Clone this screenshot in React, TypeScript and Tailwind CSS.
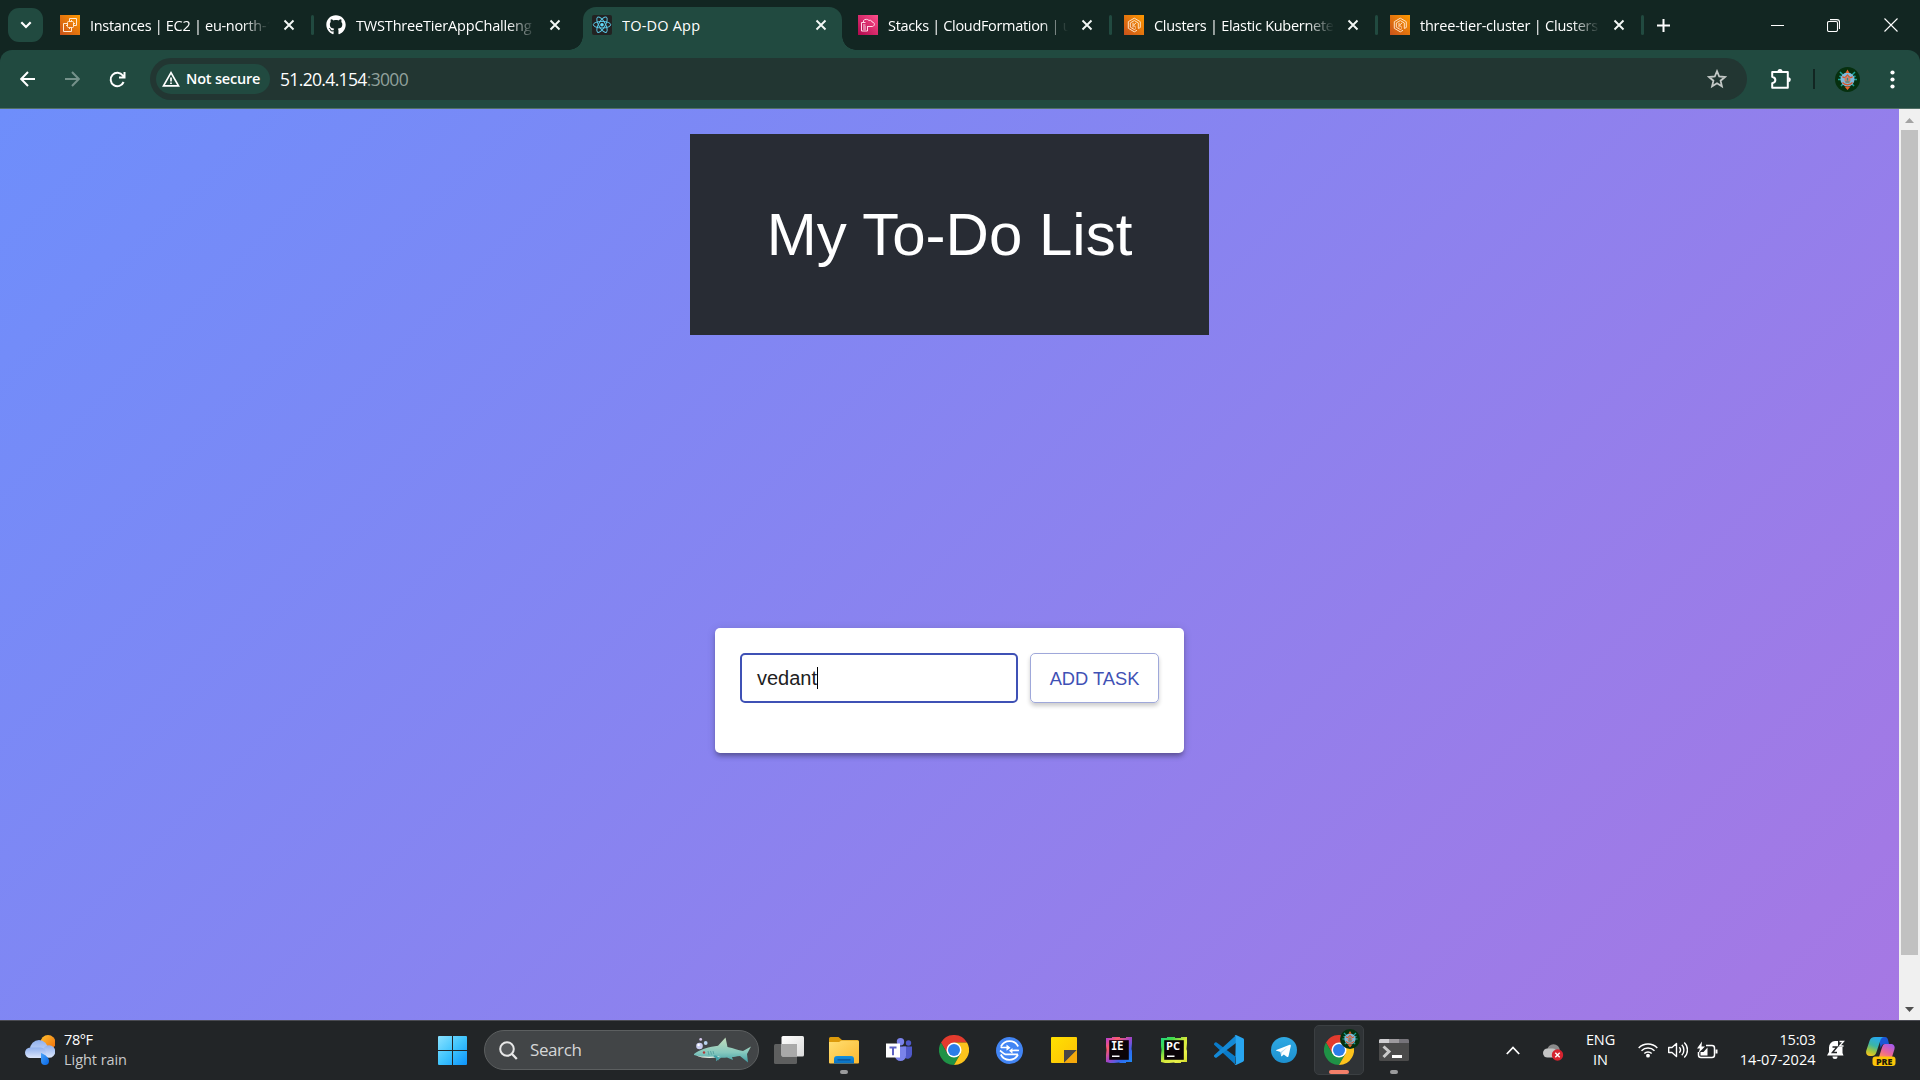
import React from "react";
import { FaGithub } from "react-icons/fa";

type Kids = { children?: React.ReactNode };

const SEGOE = "font-['Open_Sans','Noto_Sans',sans-serif]";

/* ---------- favicons ---------- */

function AwsTile({ id, from, to, children }: { id: string; from: string; to: string } & Kids) {
  return (
    <svg width="20" height="20" viewBox="0 0 20 20" fill="none">
      <defs>
        <linearGradient id={id} x1="0" y1="1" x2="1" y2="0">
          <stop offset="0" stopColor={from} />
          <stop offset="1" stopColor={to} />
        </linearGradient>
      </defs>
      <rect width="20" height="20" fill={`url(#${id})`} />
      {children}
    </svg>
  );
}

function Ec2Icon() {
  return (
    <AwsTile id="ec2" from="#c8511b" to="#ff9900">
      <g stroke="#ffe9d2" strokeWidth="1">
        <rect x="7.5" y="6.5" width="6" height="6" rx="1" />
        <path d="M9.5 5V3.500h7v7H15M6 8.500H3.500v8h8V14" />
        <path d="M9.500 5v1.500M11.500 5v1.500M9.500 12.500V14M11.500 12.500V14M13.500 8.500H15M13.500 10.500H15M6 8.500h1.500M6 10.500h1.500" />
      </g>
    </AwsTile>
  );
}

function EksIcon({ id }: { id: string }) {
  return (
    <AwsTile id={id} from="#c8511b" to="#ff9900">
      <g stroke="#ffe3c4" strokeWidth="1">
        <path d="M16.300 12.500V6.700L10.300 3.200 4.300 6.700v6.600l6 3.500 2.700-1.500" />
        <path d="M14.300 13.400V7.900l-4-2.300-4 2.300v4.300l4 2.300 1.500-.8" />
        <path d="M9 7.800v4.700M12.200 7.800L9.500 10.200l2.500 2.300M16.300 12.500l-2 1" />
      </g>
    </AwsTile>
  );
}

function StacksIcon() {
  return (
    <AwsTile id="cfn" from="#b0084d" to="#ff4f8b">
      <g stroke="#ffd9e8" strokeWidth="1">
        <path d="M7.500 7.500h-4v8.500h6v-4M5 10h2.500M5 12h3M5 14h3" />
        <path d="M5.500 7.500V5.500C7 4 9.500 3.800 11 5.500c1.500-.8 2.800 0 3 1.500 3 .2 3.200 3.800.5 4.500H9" />
      </g>
    </AwsTile>
  );
}

function ReactIcon() {
  return (
    <svg width="20" height="20" viewBox="0 0 20 20" fill="none">
      <rect width="20" height="20" rx="2" fill="#222222" />
      <g stroke="#61dafb" strokeWidth="1" opacity="0.9">
        <ellipse cx="10" cy="9.700" rx="8.700" ry="3.300" />
        <ellipse cx="10" cy="9.700" rx="8.700" ry="3.300" transform="rotate(60 10 9.700)" />
        <ellipse cx="10" cy="9.700" rx="8.700" ry="3.300" transform="rotate(120 10 9.700)" />
      </g>
      <circle cx="10" cy="9.700" r="1.800" fill="#61dafb" />
    </svg>
  );
}

/* ---------- browser chrome ---------- */

function TabClose() {
  return (
    <svg width="12" height="12" viewBox="0 0 12 12" stroke="#f4f8f6" strokeWidth="1.900" fill="none">
      <path d="M1.500 1.500l9 9M10.500 1.500l-9 9" />
    </svg>
  );
}

type TabInfo = { title: string; icon: React.ReactNode; active?: boolean; separator?: boolean; spacing: string };

const tabs: TabInfo[] = [
  { title: "Instances | EC2 | eu-north-1", icon: <Ec2Icon />, separator: true, spacing: "tracking-[-0.3px]" },
  { title: "TWSThreeTierAppChalleng", icon: <FaGithub size={20} color="#fff" />, spacing: "tracking-[-0.17px]" },
  { title: "TO-DO App", icon: <ReactIcon />, active: true, spacing: "tracking-[0.2px]" },
  { title: "Stacks | CloudFormation | u", icon: <StacksIcon />, separator: true, spacing: "tracking-[-0.32px]" },
  { title: "Clusters | Elastic Kubernete", icon: <EksIcon id="eks1" />, separator: true, spacing: "tracking-[-0.28px]" },
  { title: "three-tier-cluster | Clusters", icon: <EksIcon id="eks2" />, separator: true, spacing: "tracking-[-0.22px]" },
];

function Tab({ tab }: { tab: TabInfo }) {
  return (
    <div className="relative flex h-full w-[266px] shrink-0 items-center pl-3">
      {tab.active && (
        <div className="absolute top-[7px] left-[2.500px] h-[43px] w-[259px] rounded-t-[13px] bg-[#214a40]">
          <div className="absolute bottom-0 left-[-14px] h-[14px] w-[14px] bg-[radial-gradient(circle_at_0_0,transparent_13.500px,#214a40_14px)]" />
          <div className="absolute right-[-14px] bottom-0 h-[14px] w-[14px] bg-[radial-gradient(circle_at_100%_0,transparent_13.500px,#214a40_14px)]" />
        </div>
      )}
      <div className="relative flex items-center">
        {tab.icon}
        <div
          className={`mt-px ml-[10px] w-[183px] overflow-hidden text-[14.500px] leading-5 whitespace-nowrap text-white ${tab.spacing} ${
            tab.active ? "" : "[mask-image:linear-gradient(to_right,#000_152px,transparent_180px)]"
          }`}
        >
          {tab.title}
        </div>
        <div className="ml-[10px]">
          <TabClose />
        </div>
        {tab.separator && <div className="ml-[16px] h-5 w-[2.500px] rounded bg-[#214a40]" />}
      </div>
    </div>
  );
}

function TabStrip() {
  return (
    <div className="flex h-[50px] shrink-0 bg-[#122622]">
      <div className="flex w-12 shrink-0 items-center pl-2">
        <div className="flex h-[34px] w-[35px] items-center justify-center rounded-[11px] bg-[#214a40]">
          <svg width="12" height="8" viewBox="0 0 12 8" fill="none" stroke="#fff" strokeWidth="2.200">
            <path d="M1.300 1.300L6 6l4.700-4.700" />
          </svg>
        </div>
      </div>
      {tabs.map((t) => (
        <Tab key={t.title} tab={t} />
      ))}
      <div className="flex flex-1 items-center pl-[13px]">
        <svg width="13" height="13" viewBox="0 0 13 13" stroke="#fff" strokeWidth="2">
          <path d="M6.500 0v13M0 6.500h13" />
        </svg>
      </div>
      <div className="flex w-[172px] items-center pl-[23px]">
        <svg width="13" height="13" viewBox="0 0 13 13" stroke="#fff">
          <path d="M0 6.500h13" />
        </svg>
        <svg className="ml-[43px]" width="13" height="13" viewBox="0 0 13 13" stroke="#fff" strokeWidth="1.100" fill="none">
          <rect x=".5" y="2.500" width="10" height="10" rx="1.500" />
          <path d="M3 .6h7a2.500 2.500 0 0 1 2.500 2.500V10" />
        </svg>
        <svg className="ml-[44px]" width="14" height="14" viewBox="0 0 14 14" stroke="#fff" strokeWidth="1.100">
          <path d="M.5.5l13 13M13.500.5l-13 13" />
        </svg>
      </div>
    </div>
  );
}

function Avatar({ size }: { size: number }) {
  return (
    <svg width={size} height={size} viewBox="0 0 25 25" fill="none">
      <circle cx="12.500" cy="12.500" r="12.500" fill="#06300f" />
      <g stroke="#1ba39a" strokeWidth="1.500">
        <path d="M5 5l3 3M20 5l-3 3M3 12.500h4M22 12.500h-4M6 19l3-3M19 19l-3-3M4.500 9l3 1.500M20.500 9l-3 1.500" />
      </g>
      <circle cx="12.500" cy="12.500" r="7" fill="#7fb9dc" />
      <path d="M12.500 2.500l2 3.500h-4zM12.500 23l3-3.500h-6z" fill="#e8622c" />
      <path d="M7.500 9.500c2 2.500 3 .5 5-1.500 2 2 3 4 5 1.500M7.500 15.500c2.500 3 7.500 3 10 0" stroke="#d9592b" strokeWidth="1.300" />
      <circle cx="12.500" cy="13" r="3" fill="#c97d68" />
      <path d="M10.500 15h4M12.500 11v2.500" stroke="#1b8e8b" strokeWidth="1.200" />
    </svg>
  );
}

function Toolbar() {
  return (
    <div className="h-[59px] shrink-0 bg-[#122622]">
      <div className="flex h-[59px] items-center rounded-t-[12px] border-b border-[#527066] bg-[#214a40]">
        <svg className="ml-5" width="15" height="16" viewBox="0 0 15 16" fill="none" stroke="#fff" strokeWidth="2">
          <path d="M15 8H1.500M8 1L1.200 8 8 15" />
        </svg>
        <svg className="ml-[30px]" width="15" height="16" viewBox="0 0 15 16" fill="none" stroke="#75918a" strokeWidth="2">
          <path d="M0 8h13.500M7 1l6.800 7L7 15" />
        </svg>
        <svg className="ml-[29px]" width="17" height="17" viewBox="0 0 17 17" fill="none" stroke="#fff" strokeWidth="2">
          <path d="M14.600 11A6.700 6.700 0 1 1 13.800 4.500L15.500 6.500M15.500 1v5.500H10" />
        </svg>
        <div className="ml-[24px] flex h-[42px] w-[1597px] items-center rounded-full bg-[#223632]">
          <div className="ml-1.5 flex h-[30px] w-[114px] items-center rounded-full bg-[#214a40] pl-1.5">
            <svg width="18" height="16" viewBox="0 0 18 16" fill="none" stroke="#fff" strokeWidth="1.700">
              <path d="M9 1.700L16.500 14.800h-15zM9 6.500v4M9 11.500v1.600" />
            </svg>
            <span className="ml-[6px] text-[14.500px] leading-5 font-semibold tracking-[-0.2px] whitespace-nowrap text-white">
              Not secure
            </span>
          </div>
          <div className="ml-[10px] text-[17.500px] leading-6 tracking-[-0.65px] text-white">
            51.20.4.154<span className="text-[#91a19c]">:3000</span>
          </div>
          <svg className="mr-5 ml-auto" width="20" height="20" viewBox="0 0 20 20" fill="none" stroke="#c3c8c6" strokeWidth="1.800">
            <path d="M10 2.200l2.200 5.300 5.700.5-4.300 3.700 1.300 5.600L10 14.300l-4.900 3 1.300-5.600L2.100 8l5.700-.5z" />
          </svg>
        </div>
        <svg className="ml-[23px]" width="22" height="22" viewBox="0 0 22 22" fill="none" stroke="#fff" strokeWidth="2">
          <path d="M2.200 4h15.600v15.800H2.200v-4.600c4.200-1 4.200-5.400 0-6.500z" strokeLinejoin="round" />
          <path d="M7.500 3.500a2.500 2.500 0 0 1 5 0zM18.300 9.200a2.500 2.500 0 0 1 0 5z" fill="#fff" stroke="none" />
        </svg>
        <div className="ml-[21px] h-5 w-0.5 bg-[#122622]" />
        <div className="ml-[20px]">
          <Avatar size={25} />
        </div>
        <svg className="ml-[30px]" width="5" height="19" viewBox="0 0 5 19" fill="#fff">
          <circle cx="2.500" cy="2.500" r="2.100" />
          <circle cx="2.500" cy="9.500" r="2.100" />
          <circle cx="2.500" cy="16.500" r="2.100" />
        </svg>
      </div>
    </div>
  );
}

/* ---------- page ---------- */

function TodoPage() {
  return (
    <div className="flex h-[911px] shrink-0 overflow-hidden font-['Liberation_Sans',Arial,sans-serif]">
      <main className="flex h-[967px] w-[1899px] shrink-0 flex-col items-center bg-[linear-gradient(135deg,#6e8efb,#a777e3)] pt-[25px]">
        <header className="flex h-[201px] w-[519px] shrink-0 items-center justify-center bg-[#282c34]">
          <h1 className="text-[60px] leading-[70px] text-white">My To-Do List</h1>
        </header>
        <section className="mt-[293px] h-[125px] w-[469px] shrink-0 rounded-[5px] bg-white p-[25px] shadow-[0_4px_4px_-2px_rgba(0,0,0,0.2),0_4px_5px_0_rgba(0,0,0,0.14),0_1px_10px_0_rgba(0,0,0,0.12)]">
          <div className="flex gap-3">
            <div className="flex h-[50px] w-[278px] items-center rounded-[5px] border-2 border-[#3f51b5] pl-[15px] text-[20px] text-[#212121]">
              <span>vedant</span>
              <span className="h-[22px] w-px bg-black" />
            </div>
            <button className="flex h-[50px] w-[129px] items-center justify-center rounded-[5px] border border-[#9fa8da] pt-0.5 text-[18.300px] whitespace-nowrap text-[#3f51b5] shadow-[0_3px_4px_rgba(0,0,0,0.2)]">
              ADD TASK
            </button>
          </div>
        </section>
      </main>
      <div className="flex h-[911px] w-[21px] shrink-0 flex-col items-center bg-[#f0f0f0]">
        <svg className="mt-[9px] shrink-0" width="9" height="5" viewBox="0 0 9 5" fill="#a3a3a3">
          <path d="M0 5L4.500 0 9 5z" />
        </svg>
        <div className="mt-[7px] h-[825px] w-[17px] shrink-0 bg-[#c1c1c1]" />
        <svg className="mt-[52px] shrink-0" width="9" height="5" viewBox="0 0 9 5" fill="#505050">
          <path d="M0 0L4.500 5 9 0z" />
        </svg>
      </div>
    </div>
  );
}

/* ---------- taskbar icons ---------- */

function WeatherIcon() {
  return (
    <svg width="30" height="30" viewBox="0 0 30 30">
      <defs>
        <linearGradient id="sun" x1="0" y1="0" x2="1" y2="1">
          <stop offset="0" stopColor="#ffc02e" />
          <stop offset="1" stopColor="#ee6b0c" />
        </linearGradient>
        <linearGradient id="cloud" x1="0" y1="0" x2="0" y2="1">
          <stop offset="0" stopColor="#8fb0ee" />
          <stop offset="1" stopColor="#dce6fb" />
        </linearGradient>
        <linearGradient id="drop" x1="0" y1="0" x2="1" y2="1">
          <stop offset="0" stopColor="#4aa3f8" />
          <stop offset="1" stopColor="#0566e8" />
        </linearGradient>
      </defs>
      <circle cx="23" cy="7.500" r="7.500" fill="url(#sun)" />
      <circle cx="14" cy="14" r="9" fill="url(#cloud)" />
      <circle cx="24" cy="16.500" r="6.300" fill="url(#cloud)" />
      <rect x="0" y="12.500" width="21" height="10.500" rx="5.200" fill="url(#cloud)" />
      <path d="M16 18c5 2 8 5 8 8a4 4 0 0 1-8 0z" fill="url(#drop)" />
    </svg>
  );
}

function StartIcon() {
  return (
    <svg width="29" height="29" viewBox="0 0 29 29">
      <defs>
        <linearGradient id="start" x1="0" y1="0" x2="1" y2="1">
          <stop offset="0" stopColor="#8be2ff" />
          <stop offset="0.500" stopColor="#3fc4fd" />
          <stop offset="1" stopColor="#0c93fb" />
        </linearGradient>
      </defs>
      <path d="M0 1a1 1 0 0 1 1-1h13v14H0zM15 0h13a1 1 0 0 1 1 1v13H15zM0 15h14v14H1a1 1 0 0 1-1-1zM15 15h14v13a1 1 0 0 1-1 1H15z" fill="url(#start)" />
    </svg>
  );
}

function SharkIcon() {
  return (
    <svg width="58" height="26" viewBox="0 0 58 26">
      <defs>
        <linearGradient id="shark" x1="0" y1="0" x2="0" y2="1">
          <stop offset="0" stopColor="#c3ddbb" />
          <stop offset="0.600" stopColor="#86c8be" />
          <stop offset="1" stopColor="#3f9ea5" />
        </linearGradient>
      </defs>
      <path d="M0 17C5 12.500 16 9.500 24 8.700L31.500.500l2 9.500C40 11.500 44 13 49 14l8-4.500-4 7.500 1 8.500-8-6.500c-4 .5-6 1-8 1l1 3-6-2.500c-3 .5-5 .3-6 .3l-5 3.500.5-4C13 20.500 5 20 0 18z" fill="url(#shark)" />
      <path d="M2 18.500c6 1.500 16 1.500 24 .5l-3 1.500c-8 1-16 .5-21-2z" fill="#e9f2e6" />
      <path d="M14 14l1 4M16.500 14l1 3.500M19 14l.8 3" stroke="#4d9a9b" strokeWidth=".8" />
      <path d="M20 18.500c4 0 5 2 4.500 5l-5-4z" fill="#3f9ea5" />
      <circle cx="10" cy="15.500" r="1.200" fill="#b13a3a" />
      <circle cx="5.500" cy="9" r="3.300" fill="#c9cdf0" />
      <circle cx="11.700" cy="6" r="1.900" fill="#b9d4f0" />
      <circle cx="6.700" cy="2.400" r="1.400" fill="#d6c8ee" />
      <circle cx="4.600" cy="8" r="1.200" fill="#fff" />
    </svg>
  );
}

function TaskViewIcon() {
  return (
    <svg width="30" height="28" viewBox="0 0 30 28">
      <defs>
        <linearGradient id="tv" x1="0" y1="0" x2="1" y2="1">
          <stop offset="0" stopColor="#ffffff" />
          <stop offset="1" stopColor="#dadada" />
        </linearGradient>
      </defs>
      <rect x="0" y="8" width="23" height="20" rx="1.500" fill="#5e5f5f" />
      <rect x="7.500" y="0" width="22.500" height="20.500" rx="1.500" fill="url(#tv)" />
      <path d="M7.500 8H23v12.500H9a1.500 1.500 0 0 1-1.500-1.500z" fill="#a9a9a9" />
    </svg>
  );
}

function FolderIcon() {
  return (
    <svg width="30" height="27" viewBox="0 0 30 27">
      <defs>
        <linearGradient id="fold" x1="0" y1="0" x2="1" y2="1">
          <stop offset="0" stopColor="#ffdf72" />
          <stop offset="1" stopColor="#fbb830" />
        </linearGradient>
        <linearGradient id="foldb" x1="0" y1="0" x2="0" y2="1">
          <stop offset="0" stopColor="#1390dd" />
          <stop offset="1" stopColor="#0a6fc0" />
        </linearGradient>
      </defs>
      <path d="M0 1.500A1.500 1.500 0 0 1 1.500 0h8L13 3h15.500A1.500 1.500 0 0 1 30 4.500v8H0z" fill="#dc9a0b" />
      <path d="M0 5h10l2.500-1.500h16A1.500 1.500 0 0 1 30 5v20.500a1 1 0 0 1-1 1H1a1 1 0 0 1-1-1z" fill="url(#fold)" />
      <path d="M5 26.500V22a3 3 0 0 1 3-3h14a3 3 0 0 1 3 3v4.500z" fill="url(#foldb)" />
      <rect x="8.500" y="22.300" width="13" height="1.200" fill="#0b4d8f" />
    </svg>
  );
}

function TeamsIcon() {
  return (
    <svg width="26" height="24" viewBox="0 0 26 24">
      <circle cx="14.500" cy="3.700" r="3.700" fill="#7b83eb" />
      <circle cx="22.500" cy="5" r="2.700" fill="#5059c9" />
      <path d="M17 8.500h9V16a4.500 4.500 0 0 1-8 3z" fill="#5059c9" />
      <path d="M9 8.500h11v9a5.500 5.500 0 0 1-11 0z" fill="#7b83eb" />
      <rect x="0" y="5.500" width="14" height="14" fill="#fff" />
      <path d="M3.500 8.500h7v2H8v6.800H6v-6.800H3.500z" fill="#5c62c4" />
    </svg>
  );
}

function ChromeIcon() {
  return (
    <svg width="30" height="30" viewBox="0 0 48 48">
      <path d="M24 12H44.800A24 24 0 0 0 3.200 12L13.600 30 24 12z" fill="#e33b2e" />
      <path d="M13.600 30L3.200 12A24 24 0 0 0 24 48L34.400 30z" fill="#1f9246" />
      <path d="M34.400 30L24 48A24 24 0 0 0 44.800 12H24z" fill="#fcc31c" />
      <circle cx="24" cy="24" r="12" fill="#fff" />
      <circle cx="24" cy="24" r="9.600" fill="#2b7de9" />
    </svg>
  );
}

function SyncIcon() {
  return (
    <svg width="27" height="27" viewBox="0 0 27 27" fill="none" stroke="#fff" strokeWidth="1.700">
      <circle cx="13.500" cy="13.500" r="13.500" fill="#4285f4" stroke="none" />
      <path d="M22.200 9.500A9.600 9.600 0 0 0 5 9.500M4.800 17.500a9.600 9.600 0 0 0 17.200 0" />
      <path d="M5 9.500a3.500 3.500 0 0 0 .5 1h6M4 13.500c2 1.500 3 3.300 5.500 3.800H22M23 13.500c-2-.5-4 0-6.500 0h-1" />
      <path d="M10.500 7.500l4 3.200-4 3zM16.500 11l-3.500 2.700 3.500 3z" fill="#fff" stroke="none" />
    </svg>
  );
}

function StickyIcon() {
  return (
    <svg width="26" height="26" viewBox="0 0 26 26">
      <defs>
        <linearGradient id="sticky" x1="0" y1="0" x2="1" y2="1">
          <stop offset="0" stopColor="#ffe100" />
          <stop offset="1" stopColor="#fdbf08" />
        </linearGradient>
      </defs>
      <rect width="26" height="26" rx="1" fill="url(#sticky)" />
      <path d="M13 26V13h13z" fill="#4a4646" />
      <path d="M13 26L26 13v13z" fill="#f5a90c" />
    </svg>
  );
}

function JetbrainsIcon({ id, label, stops }: { id: string; label: string; stops: string[] }) {
  const slab = label === "IE";
  return (
    <svg width="26" height="26" viewBox="0 0 26 26">
      <defs>
        <linearGradient id={id} x1="0" y1="0" x2="1" y2="1">
          {stops.map((c, i) => (
            <stop key={i} offset={i / (stops.length - 1)} stopColor={c} />
          ))}
        </linearGradient>
      </defs>
      <path d="M0 1h6V0h8v1h6V0h6v6l-.5 6 .5 2v11h-6v1h-6l-1-.5-5 .5H4l-4-1v-7l.5-5L0 9z" fill={`url(#${id})`} />
      <rect x="3.200" y="3.200" width="19.600" height="19.600" fill="#0b0408" />
      <text
        x="5"
        y="13"
        fontSize={slab ? 12 : 11}
        fontWeight="700"
        fill="#fff"
        fontFamily={slab ? "'DejaVu Sans Mono',monospace" : "'Open Sans',sans-serif"}
        textLength={slab ? 12.5 : 14}
        lengthAdjust="spacingAndGlyphs"
      >
        {label}
      </text>
      <rect x="6" y="18.500" width="7.500" height="1.500" fill="#fff" />
    </svg>
  );
}

function VsCodeIcon() {
  return (
    <svg width="30" height="30" viewBox="0 0 30 30">
      <path d="M22 8v14L2.700 7.500a1.300 1.300 0 0 0-1.700 0L.4 8.200a1.300 1.300 0 0 0 0 1.900L21 29.300z" fill="#0a7bc9" />
      <path d="M22 .3L.4 20a1.300 1.300 0 0 0 0 1.900l.7.700a1.300 1.300 0 0 0 1.700 0L22 8z" fill="#1489d6" />
      <path d="M22 0l7 3.200a1.700 1.700 0 0 1 1 1.600v20.400a1.700 1.700 0 0 1-1 1.600L22 30c-.6.2-1 .1-1.500-.5.700.2 1.200-.3 1.200-1V1.500c0-.7-.5-1.200-1.200-1C21 0 21.500-.2 22 0z" fill="#28a5f0" />
    </svg>
  );
}

function TelegramIcon() {
  return (
    <svg width="26" height="26" viewBox="0 0 26 26">
      <defs>
        <linearGradient id="tg" x1="0" y1="0" x2="0" y2="1">
          <stop offset="0" stopColor="#2fa9e3" />
          <stop offset="1" stopColor="#1d90cf" />
        </linearGradient>
      </defs>
      <circle cx="13" cy="13" r="13" fill="url(#tg)" />
      <path d="M5.300 13.100L18.700 7.800c.7-.3 1.300.2 1.100 1.100l-2.300 10.400c-.2.800-.8 1-1.400.6l-3.300-2.500-1.700 1.600c-.5.5-1 .3-1-.3l-.6-3.700-3.900-1.200c-.8-.2-.8-.6-.3-.7z" fill="#fff" />
      <path d="M9.500 15l7.200-5-5.800 5.700-.5 3.200z" fill="#b9dbee" />
    </svg>
  );
}

function TerminalIcon() {
  return (
    <svg width="30" height="22" viewBox="0 0 30 22">
      <rect width="30" height="22" rx="1.500" fill="#4b4b4b" />
      <path d="M0 1.500A1.500 1.500 0 0 1 1.500 0H10v4H0z" fill="#d0cfd2" />
      <path d="M10 0h10v4H10z" fill="#9d9a9e" />
      <path d="M20 0h8.500A1.500 1.500 0 0 1 30 1.500V4H20z" fill="#76747a" />
      <path d="M4.500 7.500l5.500 5-5.500 5.500" fill="none" stroke="#c9c9c9" strokeWidth="3" />
      <rect x="13" y="16" width="10" height="3" fill="#fff" />
    </svg>
  );
}

function OneDriveIcon() {
  return (
    <svg width="21" height="17" viewBox="0 0 21 17">
      <circle cx="10.500" cy="6.500" r="6.300" fill="#8b8b8b" />
      <rect x="0" y="4.500" width="14" height="9" rx="4.500" fill="#c4c4c4" />
      <circle cx="14.500" cy="11" r="5.700" fill="#d5232f" />
      <path d="M12.300 8.800l4.400 4.400M16.700 8.800l-4.400 4.400" stroke="#fff" strokeWidth="1.400" />
    </svg>
  );
}

function CopilotIcon() {
  return (
    <svg width="30" height="29" viewBox="0 0 30 29">
      <defs>
        <linearGradient id="cp1" x1="0.600" y1="0" x2="0.200" y2="1">
          <stop offset="0" stopColor="#27a9f0" />
          <stop offset="0.450" stopColor="#3cb5a5" />
          <stop offset="0.750" stopColor="#a5c63a" />
          <stop offset="1" stopColor="#f9c31f" />
        </linearGradient>
        <linearGradient id="cp2" x1="0.800" y1="0" x2="0.200" y2="1">
          <stop offset="0" stopColor="#a35af0" />
          <stop offset="0.600" stopColor="#e8649a" />
          <stop offset="1" stopColor="#ff8a5c" />
        </linearGradient>
      </defs>
      <path d="M13 0h6c2 0 2.700 1.500 3.200 3.500L23 7h-4c-3 0-3.500 2-4.300 4.500z" fill="#1b57d6" />
      <path d="M9 0h9c-2.500.5-3.300 2-4 4.500L10.500 15c-.8 2.500-2 4-4.500 4H4c-3 0-4.500-2.200-3.700-5.500L3.500 4C4.300 1.300 6 0 9 0z" fill="url(#cp1)" />
      <path d="M19 7h5.500c3.200 0 4.800 2 3.900 5.300L26 20H13l3-9.500C16.800 8 17.500 7 19 7z" fill="url(#cp2)" />
      <rect x="6.500" y="19.500" width="23" height="9.500" rx="3" fill="#fcc509" />
      <text x="10" y="27.500" fontSize="8.500" fontWeight="800" fill="#1d1a0a" fontFamily="'Open Sans',sans-serif" textLength="16.500" lengthAdjust="spacingAndGlyphs">
        PRE
      </text>
    </svg>
  );
}

function BellIcon() {
  return (
    <svg width="18" height="20" viewBox="0 0 18 20" fill="none">
      <path d="M2 7.500a6.500 6.500 0 0 1 6-6.500h3v5h4.500v7l1 2.500H0L2 12z" fill="#fff" />
      <path d="M5.500 16.500h5a2.500 2.500 0 0 1-5 0z" fill="#fff" />
      <path d="M5.500 7h4.500l-4.500 5.500H10" stroke="#222527" strokeWidth="1.500" />
      <path d="M11 .5h7v6.500h-7z" fill="#222527" />
      <path d="M12.500 1.500h4L12.500 6h4" stroke="#fff" strokeWidth="1.300" />
    </svg>
  );
}

/* ---------- taskbar ---------- */

function AppSlot({ children, dot }: Kids & { dot?: boolean }) {
  return (
    <div className="relative flex h-[58px] w-[55px] shrink-0 items-center justify-center">
      {children}
      {dot && <div className="absolute bottom-[5px] left-1/2 h-1 w-2 -translate-x-1/2 rounded-full bg-[#9a9b9c]" />}
    </div>
  );
}

function Taskbar() {
  return (
    <div className="flex h-[60px] shrink-0 items-center border-t border-[#4a4b52] bg-[#222527] pb-px text-[15px] text-white">
      <div className="flex w-[438px] shrink-0 items-center pl-[25px]">
        <WeatherIcon />
        <div className="ml-[9px] text-[14.500px] leading-5 tracking-[-0.050px]">
          <div className="tracking-[-0.4px]">78°F</div>
          <div className="text-[#c9cacb]">Light rain</div>
        </div>
      </div>
      <StartIcon />
      <div className="ml-[17px] flex h-10 w-[275px] shrink-0 items-center rounded-full border border-[#5c5f60] bg-[#424547] pl-[14px]">
        <svg width="19" height="19" viewBox="0 0 19 19" fill="none" stroke="#e8e8e8" strokeWidth="2">
          <circle cx="8" cy="8" r="6.800" fill="#55585a" />
          <path d="M12.800 12.800l5 5.200" strokeWidth="2.300" />
        </svg>
        <span className="ml-[12px] text-[17px] tracking-[-0.4px] text-[#d5d6d7]">Search</span>
        <div className="mr-[6px] ml-auto">
          <SharkIcon />
        </div>
      </div>
      <div className="ml-[2.500px] flex">
        <AppSlot>
          <TaskViewIcon />
        </AppSlot>
        <AppSlot dot>
          <FolderIcon />
        </AppSlot>
        <AppSlot>
          <TeamsIcon />
        </AppSlot>
        <AppSlot>
          <ChromeIcon />
        </AppSlot>
        <AppSlot>
          <SyncIcon />
        </AppSlot>
        <AppSlot>
          <StickyIcon />
        </AppSlot>
        <AppSlot>
          <JetbrainsIcon id="ie" label="IE" stops={["#b13ae0", "#fe5c6a", "#a044c8", "#2f6bf0", "#1d8bf5"]} />
        </AppSlot>
        <AppSlot>
          <JetbrainsIcon id="pc" label="PC" stops={["#21d789", "#41d94a", "#d3e83a", "#e8f04a", "#d5dc2a"]} />
        </AppSlot>
        <AppSlot>
          <VsCodeIcon />
        </AppSlot>
        <AppSlot>
          <TelegramIcon />
        </AppSlot>
        <AppSlot>
          <div className="relative flex h-[50px] w-[50px] items-center justify-center rounded-[5px] border border-[#3b3f42] bg-[#2f3336]">
            <ChromeIcon />
            <div className="absolute top-[3px] right-[3px] h-5 w-5">
              <Avatar size={20} />
            </div>
            <div className="absolute bottom-0 left-1/2 h-1 w-5 -translate-x-1/2 rounded-full bg-[#f4806a]" />
          </div>
        </AppSlot>
        <AppSlot dot>
          <TerminalIcon />
        </AppSlot>
      </div>
      <svg className="ml-[84px] shrink-0" width="14" height="9" viewBox="0 0 14 9" fill="none" stroke="#fff" strokeWidth="1.800">
        <path d="M.8 8L7 1.500 13.200 8" />
      </svg>
      <div className="ml-[23px] mt-1 shrink-0">
        <OneDriveIcon />
      </div>
      <div className="ml-[17px] w-10 shrink-0 text-center text-[14.500px] leading-5 tracking-[-0.1px]">
        <div>ENG</div>
        <div>IN</div>
      </div>
      <svg className="ml-[17px] shrink-0" width="20" height="16" viewBox="0 0 20 16" fill="none" stroke="#fff" strokeWidth="1.500">
        <path d="M.7 6a13 13 0 0 1 18.600 0M3.500 8.700a9.200 9.200 0 0 1 13 0M6.300 11.500a5.200 5.200 0 0 1 7.400 0" />
        <circle cx="10" cy="13.700" r="1.900" fill="#fff" stroke="none" />
      </svg>
      <svg className="ml-[10px] shrink-0" width="20" height="18" viewBox="0 0 20 18" fill="none" stroke="#fff" strokeWidth="1.400" strokeLinejoin="round">
        <path d="M.7 6.500v5H4l4.500 4v-13L4 6.500z" />
        <path d="M11.300 6.300a4 4 0 0 1 0 5.400M13.800 3.800a7.500 7.500 0 0 1 0 10.400M16.300 1.500a10.500 10.500 0 0 1 0 15" />
      </svg>
      <svg className="ml-[9px] shrink-0" width="21" height="18" viewBox="0 0 21 18" fill="none" stroke="#fff" strokeWidth="1.500">
        <path d="M9 4.500h6a2.500 2.500 0 0 1 2.500 2.500v7a2.500 2.500 0 0 1-2.500 2.500H4A2.500 2.500 0 0 1 1.500 14v-3" />
        <path d="M3.500 14.500V11h3l4-4.500v8z" fill="#fff" stroke="none" />
        <path d="M5 .5L0 7.500h3L1.500 12 8 5.500H4.500z" fill="#fff" stroke="none" />
        <path d="M19.500 8.500v4" strokeWidth="2" />
      </svg>
      <div className="ml-[15px] w-[83px] shrink-0 text-right text-[14.500px] leading-5 whitespace-nowrap">
        <div className="tracking-[-0.2px]">15:03</div>
        <div className="tracking-[0px]">14-07-2024</div>
      </div>
      <div className="ml-[11px] shrink-0">
        <BellIcon />
      </div>
      <div className="mt-[3px] ml-[21px] shrink-0">
        <CopilotIcon />
      </div>
    </div>
  );
}

export default function App() {
  return (
    <div className={`flex h-[1080px] w-[1920px] flex-col overflow-hidden ${SEGOE}`}>
      <TabStrip />
      <Toolbar />
      <TodoPage />
      <Taskbar />
    </div>
  );
}
